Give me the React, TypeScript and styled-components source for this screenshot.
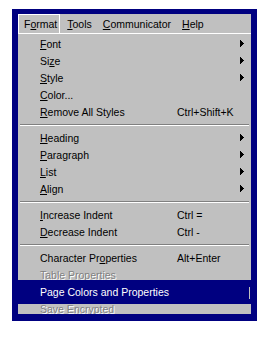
import React from "react"
import styled, { createGlobalStyle } from "styled-components"

const GlobalStyle = createGlobalStyle`
  body {
    margin: 0;
    background: #ffffff;
    font-family: "Liberation Sans", Arial, sans-serif;
    font-size: 10.5px;
    color: #000000;
  }
`

const Frame = styled.div`
  margin: 9px 0 0 12px;
  width: 245px;
  background: #000080;
  padding: 5px 6px 7px;
  box-sizing: border-box;
`

const Panel = styled.div`
  background: #c0c0c0;
  height: 300px;
  overflow: hidden;
`

const MenuBar = styled.div`
  display: flex;
  height: 19px;
  border-bottom: 1px solid #ffffff;
  margin-bottom: 1px;
`

const BarItem = styled.div<{ $open?: boolean }>`
  padding: 0 4px 0 5px;
  line-height: 18px;
  border: 1px solid transparent;
  border-bottom: none;
  ${(p) =>
    p.$open &&
    `
    border-color: #ffffff;
    padding: 0 2px 0 5px;
    margin-right: 1px;
  `}
`

const Key = styled.span`
  text-decoration: underline;
`

const Row = styled.div<{ $active?: boolean; $disabled?: boolean }>`
  display: flex;
  align-items: center;
  height: 17px;
  padding: 0 7px 0 22px;
  white-space: nowrap;
  ${(p) =>
    p.$disabled &&
    `
    color: #808080;
    text-shadow: 1px 1px 0 #ffffff;
  `}
  ${(p) =>
    p.$active &&
    `
    position: relative;
    z-index: 1;
    background: #000080;
    color: #ffffff;
    margin: -3px 0 -4px;
    padding-top: 3px;
    padding-bottom: 4px;
    &::after {
      content: "";
      position: absolute;
      right: 1px;
      top: 7px;
      width: 1px;
      height: 12px;
      background: #c0c0c0;
    }
  `}
`

const Label = styled.span`
  width: 137px;
`

const Shortcut = styled.span`
  flex: 1;
`

const Separator = styled.div`
  height: 9px;
  margin: 0 2px;
  box-sizing: border-box;
  padding-top: 4px;
  &::before {
    content: "";
    display: block;
    height: 1px;
    background: #808080;
    border-bottom: 1px solid #ffffff;
  }
`

const Arrow = () => (
  <svg width="4" height="7" viewBox="0 0 4 7" shapeRendering="crispEdges">
    <rect x="0" y="0" width="1" height="7" fill="#000" />
    <rect x="1" y="1" width="1" height="5" fill="#000" />
    <rect x="2" y="2" width="1" height="3" fill="#000" />
    <rect x="3" y="3" width="1" height="1" fill="#000" />
  </svg>
)

type Item = {
  pre?: string
  key?: string
  post?: string
  shortcut?: string
  sub?: boolean
  active?: boolean
  disabled?: boolean
}

const groups: Item[][] = [
  [
    { key: "F", post: "ont", sub: true },
    { pre: "Si", key: "z", post: "e", sub: true },
    { key: "S", post: "tyle", sub: true },
    { key: "C", post: "olor..." },
    { key: "R", post: "emove All Styles", shortcut: "Ctrl+Shift+K" },
  ],
  [
    { key: "H", post: "eading", sub: true },
    { key: "P", post: "aragraph", sub: true },
    { key: "L", post: "ist", sub: true },
    { key: "A", post: "lign", sub: true },
  ],
  [
    { key: "I", post: "ncrease Indent", shortcut: "Ctrl =" },
    { key: "D", post: "ecrease Indent", shortcut: "Ctrl -" },
  ],
  [
    { pre: "Character Pr", key: "o", post: "perties", shortcut: "Alt+Enter" },
    { key: "T", post: "able Properties", disabled: true },
    { pre: "Page Colors and Properties", active: true },
    { pre: "Save ", key: "E", post: "ncrypted", disabled: true },
  ],
]

export default function App() {
  return (
    <>
      <GlobalStyle />
      <Frame>
        <Panel>
          <MenuBar>
            <BarItem $open>
              F<Key>o</Key>rmat
            </BarItem>
            <BarItem>
              <Key>T</Key>ools
            </BarItem>
            <BarItem>
              <Key>C</Key>ommunicator
            </BarItem>
            <BarItem>
              <Key>H</Key>elp
            </BarItem>
          </MenuBar>
          {groups.map((group, gi) => (
            <React.Fragment key={gi}>
              {gi > 0 && <Separator />}
              {group.map((it, i) => (
                <Row key={i} $active={it.active} $disabled={it.disabled}>
                  <Label>
                    {it.pre}
                    {it.key && <Key>{it.key}</Key>}
                    {it.post}
                  </Label>
                  <Shortcut>{it.shortcut}</Shortcut>
                  {it.sub && <Arrow />}
                </Row>
              ))}
            </React.Fragment>
          ))}
        </Panel>
      </Frame>
    </>
  )
}
